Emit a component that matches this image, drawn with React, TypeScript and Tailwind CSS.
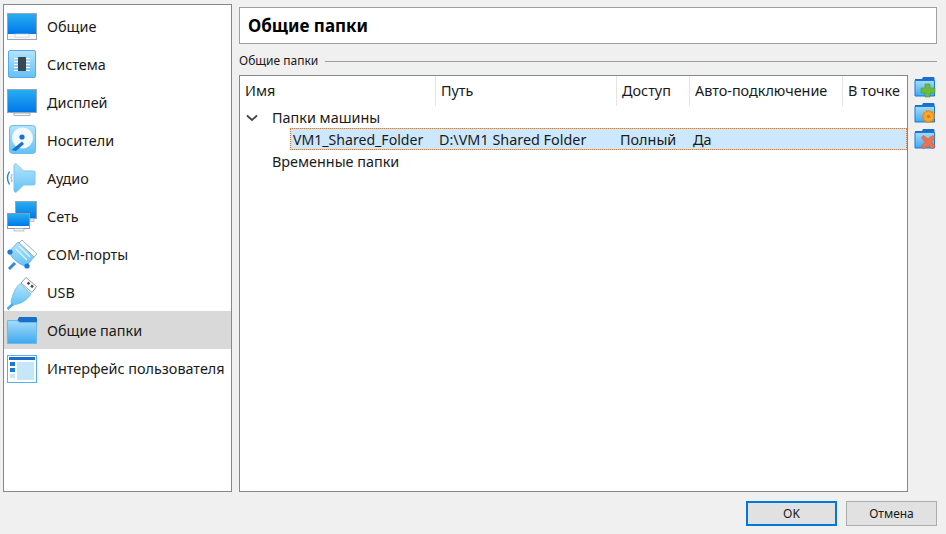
import { ReactNode } from 'react';

const FONT = 'font-["Noto_Sans","Open_Sans",sans-serif]';

const IconDefs = () => (
  <svg width="0" height="0" className="block h-0 w-0">
    <defs>
      <linearGradient id="screen" x1="0" y1="0" x2="0" y2="1">
        <stop offset="0" stopColor="#27aef2" />
        <stop offset="1" stopColor="#0078ea" />
      </linearGradient>
      <linearGradient id="light" x1="0" y1="0" x2="0" y2="1">
        <stop offset="0" stopColor="#b5e4fb" />
        <stop offset="1" stopColor="#62c2f5" />
      </linearGradient>
      <linearGradient id="folder" x1="0" y1="0" x2="0" y2="1">
        <stop offset="0" stopColor="#a5dcf9" />
        <stop offset="1" stopColor="#3fa9f0" />
      </linearGradient>
    </defs>
  </svg>
);

const Svg = ({ children }: { children: ReactNode }) => (
  <svg width="32" height="33" viewBox="0 0 32 33" className="shrink-0">
    {children}
  </svg>
);

const GeneralIcon = () => (
  <Svg>
    <rect x="1.500" y="2.500" width="29" height="26" fill="#f4f6f7" stroke="#9aa5ad" />
    <rect x="2" y="3" width="28" height="20" fill="url(#screen)" />
    <rect x="9" y="23" width="14" height="3" fill="#fff" stroke="#c3cbd0" strokeWidth="0.700" />
  </Svg>
);

const SystemIcon = () => (
  <Svg>
    <rect x="2.500" y="1.500" width="27" height="27" rx="1.500" fill="url(#light)" stroke="#5aa8e8" />
    <path d="M8 9.500h16M8 12.500h16M8 15.500h16M8 18.500h16M8 21.500h16" stroke="#fff" strokeWidth="1" />
    <rect x="12" y="8" width="8" height="14" rx="0.500" fill="#3a4652" />
  </Svg>
);

const DisplayIcon = () => (
  <Svg>
    <rect x="1.500" y="2.500" width="29" height="23" fill="url(#screen)" stroke="#9aa5ad" />
    <path d="M8 26h16v2.500H8z" fill="#f4f6f7" stroke="#9aa5ad" strokeWidth="0.800" />
  </Svg>
);

const StorageIcon = () => (
  <Svg>
    <rect x="3.500" y="0.500" width="26" height="28" rx="3" fill="url(#light)" stroke="#6eb8ea" />
    <circle cx="16.500" cy="13" r="10.500" fill="#f3fafe" />
    <circle cx="16" cy="12" r="2.600" fill="#1b6fd0" />
    <path d="M5.500 25 16 16.500l2 2.500-8 7z" fill="#1b6fd0" />
  </Svg>
);

const AudioIcon = () => (
  <Svg>
    <path d="M8 3c0-2 1.500-3 3-1.500L17.500 8h10c1 0 1.500.5 1.500 1.500v11c0 1-.5 1.500-1.500 1.500h-10L11 28.500C9.500 30 8 29 8 27z" fill="url(#light)" stroke="#7cc4ef" />
    <path d="M3.500 8.500c-2.500 4-2.500 9 0 13" fill="none" stroke="#1e82dc" strokeWidth="1.400" />
    <path d="M6 11c-1 2.500-1 5.500 0 8" fill="none" stroke="#a3c9ea" strokeWidth="1.600" />
  </Svg>
);

const NetworkIcon = () => (
  <Svg>
    <rect x="9.500" y="0.500" width="21" height="17" fill="url(#screen)" stroke="#9aa5ad" />
    <rect x="24" y="17.500" width="4" height="3" fill="#e6eaec" stroke="#9aa5ad" strokeWidth="0.600" />
    <rect x="1.500" y="12.500" width="22" height="15" fill="#f8fafb" stroke="#8f9aa2" />
    <rect x="2" y="13" width="21" height="12" fill="url(#screen)" />
    <rect x="8" y="27.500" width="10" height="2.500" fill="#eef1f3" stroke="#9aa5ad" strokeWidth="0.600" />
  </Svg>
);

const ComIcon = () => (
  <Svg>
    <path d="M16 1 31 15l-3 3L13 4z" fill="#fff" stroke="#a8aeb2" />
    <path d="M12 3 28 18l-8 9.500C14 26 6 20 3 13z" fill="url(#light)" stroke="#6eb8ea" />
    <path d="M13 7 24 18M10 10l11 11" stroke="#e4f4fd" strokeWidth="1.200" />
    <circle cx="4" cy="13" r="2.600" fill="#1e78d8" />
    <circle cx="21" cy="27" r="2.600" fill="#1e78d8" />
    <path d="m9 24-6 6" stroke="#2d8ae0" strokeWidth="3" />
  </Svg>
);

const UsbIcon = () => (
  <Svg>
    <path d="m20 0.500 10.500 9-4.500 6L15 6z" fill="#fff" stroke="#8f9aa2" />
    <rect x="21.500" y="5" width="2.500" height="2.500" transform="rotate(40 22.500 6)" fill="#39434c" />
    <rect x="25" y="8" width="2.500" height="2.500" transform="rotate(40 26 9)" fill="#39434c" />
    <path d="M14 6.500 25 17c-3 4.500-7.500 8.500-12 9.500L8 28c-1.500-.2-2.500-1.200-3-2.500C6 19 9 11 14 6.500z" fill="url(#light)" stroke="#79c3ef" />
    <path d="M7 27 1.500 32" stroke="#45aaf0" strokeWidth="2.500" />
  </Svg>
);

const FolderIcon = () => (
  <Svg>
    <path d="M13 2h16.500c.8 0 1.500.7 1.500 1.500V8H10z" fill="#1a6fc9" />
    <path d="M1.500 5.500H11L14 7.500H30.500V28.500H1.500z" fill="url(#folder)" stroke="#6ab8ee" />
  </Svg>
);

const InterfaceIcon = () => (
  <Svg>
    <rect x="1.500" y="2.500" width="29" height="27" fill="#fff" stroke="#57aeee" />
    <rect x="3" y="4" width="26" height="3" fill="#1a6fc9" />
    <rect x="4" y="9" width="5" height="4" fill="#1a78d8" />
    <rect x="4" y="15" width="5" height="4" fill="#1a78d8" />
    <rect x="4" y="21" width="5" height="4" fill="#c6e6fa" />
    <rect x="11" y="9" width="17" height="18" fill="#c6e6fa" />
  </Svg>
);

const sections = [
  { label: 'Общие', icon: <GeneralIcon /> },
  { label: 'Система', icon: <SystemIcon /> },
  { label: 'Дисплей', icon: <DisplayIcon /> },
  { label: 'Носители', icon: <StorageIcon /> },
  { label: 'Аудио', icon: <AudioIcon /> },
  { label: 'Сеть', icon: <NetworkIcon /> },
  { label: 'COM-порты', icon: <ComIcon /> },
  { label: 'USB', icon: <UsbIcon /> },
  { label: 'Общие папки', icon: <FolderIcon />, active: true },
  { label: 'Интерфейс пользователя', icon: <InterfaceIcon /> },
];

const columns = [
  { label: 'Имя', width: 'w-[196px]' },
  { label: 'Путь', width: 'w-[181px]' },
  { label: 'Доступ', width: 'w-[73px]' },
  { label: 'Авто-подключение', width: 'w-[153px]' },
  { label: 'В точке', width: 'flex-1' },
];

const ToolFolder = ({ children }: { children: ReactNode }) => (
  <svg width="22" height="22" viewBox="0 0 22 22">
    <path d="M1 3h7l1-2h10c1 0 1.500.5 1.500 1.500V5H1z" fill="#1a6fc9" />
    <path d="M1 4.500h19.500V20H1z" fill="url(#folder)" stroke="#1a78d8" />
    {children}
  </svg>
);

const AddIcon = () => (
  <ToolFolder>
    <path d="M11 8h5v4h5v5h-5v4h-5v-4H7v-5h4z" fill="#6cbb3c" stroke="#4f9a2a" strokeWidth="0.600" />
  </ToolFolder>
);

const EditIcon = () => (
  <ToolFolder>
    <circle cx="14.500" cy="14.500" r="5.500" fill="#f7a830" stroke="#e58a1a" strokeDasharray="2 0.800" strokeWidth="2" />
    <circle cx="14.500" cy="14.500" r="1.800" fill="#e07c10" />
  </ToolFolder>
);

const RemoveIcon = () => (
  <ToolFolder>
    <path d="m7.500 9.500 2-2 4.500 3.500 4.500-3.500 2.500 2-3.500 4.500 3.500 4.500-2.500 2.500-4.500-3.500-4.500 3.500-2-2.500 3.500-4.500z" fill="#f0714f" stroke="#d9583a" strokeWidth="0.600" />
  </ToolFolder>
);

export default function App() {
  return (
    <div className={`flex h-[534px] w-[946px] flex-col overflow-hidden bg-[#f0f0f0] pl-[3px] pr-[9px] pt-[4px] text-[14.4px] text-[#1a1a1a] ${FONT}`}>
      <IconDefs />
      <div className="flex h-[488px] gap-[7px]">
        {/* Section list */}
        <aside className="h-full w-[229px] shrink-0 border border-[#828790] bg-white pt-[2px]">
          {sections.map(s => (
            <div
              key={s.label}
              className={`flex h-[38px] items-center gap-[9px] pl-[2px] pt-[2px] ${s.active ? 'bg-[#d9d9d9]' : ''}`}
            >
              {s.icon}
              <span className="whitespace-nowrap leading-none">{s.label}</span>
            </div>
          ))}
        </aside>

        <main className="flex min-w-0 flex-1 flex-col pt-[3px]">
          <div className="flex h-[37px] items-center border border-[#a0a0a0] bg-white pl-[8px] text-[17px] font-bold text-black">
            Общие папки
          </div>

          <div className="mt-[9px] flex h-[16px] items-center gap-[7px] text-[12px] leading-none">
            <span>Общие папки</span>
            <div className="h-px flex-1 bg-[#a0a0a0]" />
          </div>

          <div className="mt-[6px] flex min-h-0 flex-1 gap-[6px]">
            <div className="w-[669px] border border-[#828790] bg-white">
              <div className="flex h-[30px]">
                {columns.map((c, i) => (
                  <div
                    key={c.label}
                    className={`flex items-center whitespace-nowrap pl-[5px] ${c.width} ${i < 4 ? 'border-r border-[#e5e5e5]' : ''}`}
                  >
                    {c.label}
                  </div>
                ))}
              </div>
              <div className="flex h-[22px] items-center pt-[2px] leading-none">
                <svg width="12" height="8" viewBox="0 0 12 8" className="ml-[6px]">
                  <path d="M1 1.500 6 6l5-4.500" fill="none" stroke="#444" strokeWidth="1.800" />
                </svg>
                <span className="ml-[14px]">Папки машины</span>
              </div>
              <div className="ml-[50px] flex h-[22px] items-center whitespace-nowrap border border-dotted border-[#e8792a] bg-[#cce8ff] pt-[2px] leading-none">
                <span className="w-[148px] pl-[2px] text-[14.1px]">VM1_Shared_Folder</span>
                <span className="w-[181px]">D:\VM1 Shared Folder</span>
                <span className="w-[73px]">Полный</span>
                <span>Да</span>
              </div>
              <div className="flex h-[22px] items-center pl-[32px] pt-[2px] leading-none">Временные папки</div>
            </div>

            <div className="flex flex-col gap-[4px] pt-[1px]">
              <AddIcon />
              <EditIcon />
              <RemoveIcon />
            </div>
          </div>
        </main>
      </div>

      <div className="mt-[9px] flex justify-end gap-[9px] text-[12px] leading-none">
        <button className="flex h-[25px] w-[91px] items-center justify-center border-2 border-[#0078d7] bg-[#e1e1e1]">OK</button>
        <button className="flex h-[25px] w-[91px] items-center justify-center border border-[#adadad] bg-[#e1e1e1]">Отмена</button>
      </div>
    </div>
  );
}
